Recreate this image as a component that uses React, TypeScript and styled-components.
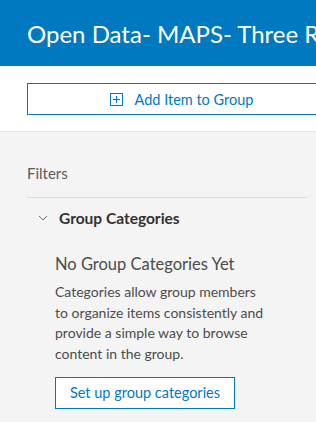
import React from "react";
import styled, { createGlobalStyle } from "styled-components";

const Global = createGlobalStyle`
  html, body { margin: 0; padding: 0; background: #f4f4f4; overflow: hidden; }
  body { font-family: Lato, "Open Sans", sans-serif; -webkit-font-smoothing: antialiased; }
  * { box-sizing: border-box; }
`;

const Page = styled.div`
  width: 316px;
  height: 422px;
  overflow: hidden;
  background: #f4f4f4;
`;

const Header = styled.header`
  height: 66px;
  background: #0079c1;
  display: flex;
  align-items: center;
  padding-left: 27px;
  overflow: hidden;
`;

const Title = styled.h1`
  margin: 0;
  color: #ffffff;
  font-size: 24px;
  font-weight: 400;
  white-space: nowrap;
`;

const Actions = styled.div`
  background: #ffffff;
  padding: 17px 0 17px 27px;
  border-bottom: 1px solid #e4e4e4;
  height: 66px;
`;

const WideButton = styled.button`
  width: 309px;
  height: 32px;
  border: 1px solid #0079c1;
  background: #ffffff;
  color: #0079c1;
  font-family: inherit;
  font-size: 14.5px;
  display: flex;
  align-items: center;
  justify-content: center;
  gap: 12px;
  padding: 0;
  cursor: pointer;
`;

const Panel = styled.section`
  padding: 31px 9px 0 27px;
`;

const FiltersLabel = styled.div`
  color: #595959;
  font-size: 15px;
  line-height: 20px;
  padding-bottom: 14px;
  border-bottom: 1px solid #dcdcdc;
`;

const GroupHeader = styled.div`
  display: flex;
  align-items: center;
  gap: 11px;
  padding: 3px 0 0 11px;
  height: 36px;
  color: #323232;
  font-size: 15.5px;
  font-weight: 700;
`;

const Body = styled.div`
  padding: 19px 0 0 28px;
`;

const EmptyTitle = styled.div`
  color: #4c4c4c;
  font-size: 16.5px;
  line-height: 22px;
  margin-bottom: 7px;
`;

const Para = styled.p`
  margin: 0;
  color: #4c4c4c;
  font-size: 14px;
  line-height: 20.7px;
  width: 250px;
`;

const SetupButton = styled.button`
  margin-top: 12px;
  height: 32px;
  width: 180px;
  border: 1px solid #0079c1;
  background: #ffffff;
  color: #0079c1;
  font-family: inherit;
  font-size: 14.5px;
  padding: 0;
  cursor: pointer;
`;

const PlusIcon = () => (
  <svg width="13" height="13" viewBox="0 0 13 13" fill="none" stroke="#0079c1" strokeWidth="1">
    <rect x="0.5" y="0.5" width="12" height="12" />
    <path d="M6.5 3v7M3 6.5h7" />
  </svg>
);

const Chevron = () => (
  <svg width="10" height="10" viewBox="0 0 10 10" fill="none" stroke="#6e6e6e" strokeWidth="1">
    <path d="M1 3l4 4 4-4" />
  </svg>
);

export default function App() {
  return (
    <Page>
      <Global />
      <Header>
        <Title>Open Data- MAPS- Three Rivers</Title>
      </Header>
      <Actions>
        <WideButton>
          <PlusIcon />
          <span>Add Item to Group</span>
        </WideButton>
      </Actions>
      <Panel>
        <FiltersLabel>Filters</FiltersLabel>
        <GroupHeader>
          <Chevron />
          <span>Group Categories</span>
        </GroupHeader>
        <Body>
          <EmptyTitle>No Group Categories Yet</EmptyTitle>
          <Para>
            Categories allow group members
            <br />
            to organize items consistently and
            <br />
            provide a simple way to browse
            <br />
            content in the group.
          </Para>
          <SetupButton>Set up group categories</SetupButton>
        </Body>
      </Panel>
    </Page>
  );
}
